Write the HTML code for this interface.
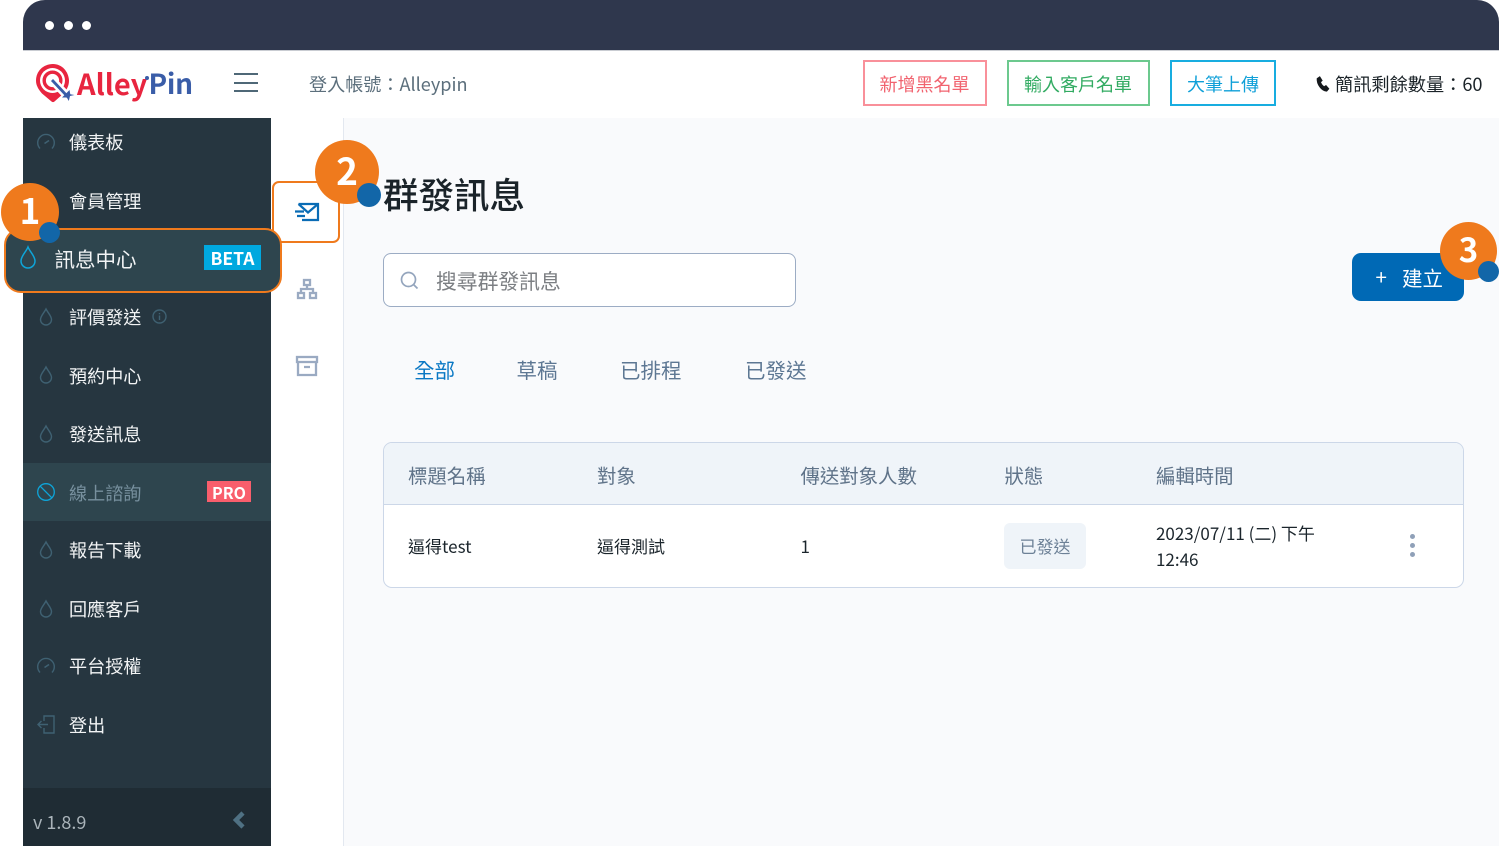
<!DOCTYPE html>
<html lang="zh-Hant"><head><meta charset="utf-8">
<style>
html,body{margin:0;padding:0;background:#fff;width:1500px;height:846px;overflow:hidden}
body{position:relative;font-family:"Liberation Sans","Noto Sans CJK TC",sans-serif}
*{box-sizing:border-box}
.t{position:absolute;white-space:nowrap;font-family:"Noto Sans CJK TC","Liberation Sans",sans-serif;line-height:24px;height:24px}
.b{position:absolute}
svg{position:absolute;overflow:visible}
.m{color:#f2f4f5;font-size:18.100px;left:69px}
.ic{fill:none;stroke:#3f6172;stroke-width:1.400}
.th{color:#5f7389;font-size:19.400px;top:463px}
.td{color:#1b252c;font-size:17px}
.tab{color:#5d7793;font-size:20.500px;top:357px}
.btn{position:absolute;top:60px;height:46px;border:2px solid;background:#fff;font-family:"Noto Sans CJK TC",sans-serif;font-size:18px;line-height:45px;text-align:center}
.c{position:absolute;border-radius:50%;background:#ef7a1d;color:#fff;font-family:"Noto Sans CJK TC",sans-serif;font-weight:700;text-align:center}
.d{position:absolute;border-radius:50%;background:#1266a8}
</style></head><body>
<div class="b" style="left:343px;top:118px;width:1156px;height:728px;background:#f9fafc"></div>
<div class="b" style="left:271px;top:118px;width:73px;height:728px;background:#fff;border-right:1.500px solid #e3e8f0"></div>

<div class="b" style="left:23px;top:0;width:1476px;height:51px;background:#2f374d;border-radius:22px 22px 0 0;border-bottom:1px solid #c9ccd2"></div>
<div class="b" style="left:45px;top:21px;width:9px;height:9px;border-radius:50%;background:#fff"></div>
<div class="b" style="left:64px;top:21px;width:9px;height:9px;border-radius:50%;background:#fff"></div>
<div class="b" style="left:82px;top:21px;width:9px;height:9px;border-radius:50%;background:#fff"></div>

<svg style="left:35px;top:64px" width="40" height="40" viewBox="0 0 40 40">
<path d="M18 0C8 0 1 7.500 1 16.500c0 5 2.500 9 6 13l9.500 8c1 .800 2 .800 3 0l9-8c3.500-4 5.500-8 5.500-13C33.500 7.500 27 0 18 0z" fill="#e8253f"/>
<circle cx="17.500" cy="16.500" r="12.500" fill="#fff"/>
<circle cx="17.500" cy="16.500" r="8.300" fill="none" stroke="#e8253f" stroke-width="3.400"/>
<path d="M17 16l19 20" stroke="#fff" stroke-width="8"/>
<path d="M17 16l16 17" stroke="#3a5da8" stroke-width="2.800"/>
<path d="M27 33.500l7.500-7.500 .8 4.200 4.200 .8-4.500 1-1.200 5-2-3.500z" fill="#3a5da8"/>
</svg>
<div class="t" style="left:77px;top:63px;height:40px;line-height:40px;font-size:29px;font-weight:700;color:#e8253f;letter-spacing:0">Alley</div>
<div class="b" style="left:145px;top:76px;width:4px;height:4px;border-radius:50%;background:#3a5da8"></div>
<div class="t" style="left:148.500px;top:63px;height:40px;line-height:40px;font-size:28px;font-weight:700;color:#3a5da8;letter-spacing:-.3px">Pin</div>
<div class="b" style="left:234px;top:73px;width:24px;height:2px;background:#4f6877"></div>
<div class="b" style="left:234px;top:82px;width:24px;height:2px;background:#4f6877"></div>
<div class="b" style="left:234px;top:90px;width:24px;height:2px;background:#4f6877"></div>
<div class="t" style="left:309px;top:72px;font-size:18.100px;color:#5c6f7c">登入帳號：Alleypin</div>

<div class="btn" style="left:863px;width:124px;border-color:#f9909a;color:#f1636f;text-indent:-1px">新增黑名單</div>
<div class="btn" style="left:1007px;width:143px;border-color:#6cc98e;color:#32ab62;text-indent:-1px">輸入客戶名單</div>
<div class="btn" style="left:1170px;width:106px;border-color:#18ade0;color:#0fa0d8">大筆上傳</div>
<svg style="left:1316px;top:76px" width="15" height="16" viewBox="0 0 15 16"><path d="M1 2.500 3.800.6l2.500 4-1.700 1.500c.6 1.700 1.700 3.200 3.400 4.500l2-1.200 3 3.400L10.800 15.300C5 14.800.6 8 1 2.500z" fill="#15191c" stroke="#15191c" stroke-width=".6"/></svg>
<div class="t" style="left:1335px;top:72px;font-size:18.200px;color:#1b2328">簡訊剩餘數量：60</div>

<div class="b" style="left:23px;top:118px;width:248px;height:728px;background:#263640"></div>
<div class="b" style="left:23px;top:788px;width:248px;height:58px;background:#1f2c34"></div>
<div class="b" style="left:23px;top:463px;width:248px;height:58px;background:#2e454e"></div>

<svg class="ic" style="left:37px;top:133px" width="18" height="18" viewBox="0 0 18 18"><path d="M3 15.500A8.300 8.300 0 1 1 15 15.500"/><path d="M7.500 10.500 12 7.500" stroke-width="1.600"/></svg>
<div class="t m" style="top:130px">儀表板</div>
<div class="t m" style="top:189px">會員管理</div>

<svg class="ic" style="left:39px;top:308px" width="14" height="18" viewBox="0 0 14 18"><path d="M7 1C5 5 1.500 8 1.500 11.500a5.500 5.500 0 0 0 11 0C12.500 8 9 5 7 1z"/></svg>
<div class="t m" style="top:305px">評價發送</div>
<svg class="ic" style="left:152px;top:309px" width="15" height="15" viewBox="0 0 15 15" stroke-width="1.300"><circle cx="7.500" cy="7.500" r="6.500"/><path d="M7.500 6.500v4.500M7.500 4v1.300"/></svg>
<svg class="ic" style="left:39px;top:366px" width="14" height="18" viewBox="0 0 14 18"><path d="M7 1C5 5 1.500 8 1.500 11.500a5.500 5.500 0 0 0 11 0C12.500 8 9 5 7 1z"/></svg>
<div class="t m" style="top:363.500px">預約中心</div>
<svg class="ic" style="left:39px;top:425px" width="14" height="18" viewBox="0 0 14 18"><path d="M7 1C5 5 1.500 8 1.500 11.500a5.500 5.500 0 0 0 11 0C12.500 8 9 5 7 1z"/></svg>
<div class="t m" style="top:422px">發送訊息</div>
<svg style="left:37px;top:483px" width="18" height="18" viewBox="0 0 18 18" fill="none" stroke="#0ea5d9" stroke-width="1.300"><circle cx="9" cy="9" r="8.300"/><path d="M3.200 3.200 14.800 14.800"/></svg>
<div class="t m" style="top:481px;color:#77909e">線上諮詢</div>
<div class="b" style="left:207px;top:481px;width:44px;height:21px;background:#f95e6c;color:#fff;font:700 16px/23px 'Noto Sans CJK TC',sans-serif;text-align:center">PRO</div>
<svg class="ic" style="left:39px;top:541px" width="14" height="18" viewBox="0 0 14 18"><path d="M7 1C5 5 1.500 8 1.500 11.500a5.500 5.500 0 0 0 11 0C12.500 8 9 5 7 1z"/></svg>
<div class="t m" style="top:537.500px">報告下載</div>
<svg class="ic" style="left:39px;top:600px" width="14" height="18" viewBox="0 0 14 18"><path d="M7 1C5 5 1.500 8 1.500 11.500a5.500 5.500 0 0 0 11 0C12.500 8 9 5 7 1z"/></svg>
<div class="t m" style="top:596.500px">回應客戶</div>
<svg class="ic" style="left:37px;top:657px" width="18" height="18" viewBox="0 0 18 18"><path d="M3 15.500A8.300 8.300 0 1 1 15 15.500"/><path d="M7.500 10.500 12 7.500" stroke-width="1.600"/></svg>
<div class="t m" style="top:654px">平台授權</div>
<svg class="ic" style="left:37px;top:715px" width="18" height="19" viewBox="0 0 18 19"><path d="M7 6V1h10v17H7v-5"/><path d="M1 9.500h10M4.500 6 1 9.500 4.500 13"/></svg>
<div class="t m" style="top:713px">登出</div>
<div class="t" style="left:33px;top:809.500px;font-size:18px;color:#aab4ba">v 1.8.9</div>
<svg style="left:232px;top:811px" width="14" height="18" viewBox="0 0 14 18"><path d="M11 2 4 9l7 7" fill="none" stroke="#4f7183" stroke-width="4.500"/></svg>

<div class="b" style="left:272px;top:181px;width:68px;height:62px;border:2px solid #ef7a1d;border-radius:7px;background:#fff"></div>
<svg style="left:295px;top:203px" width="24" height="18" viewBox="0 0 24 18" fill="none" stroke="#0a6cb5" stroke-width="2.200"><path d="M3.500 1h19.500v16H7M3.500 1 13 9.500 23 1M0 8.500h9M2 13h8" /></svg>
<svg style="left:297px;top:279px" width="20" height="20" viewBox="0 0 20 20" fill="none" stroke="#9aaac2" stroke-width="2.300"><rect x="7" y="1" width="6" height="5"/><rect x="1" y="14" width="6" height="5"/><rect x="13" y="14" width="6" height="5"/><path d="M10 6v4M4 14v-4h12v4"/></svg>
<svg style="left:296px;top:356px" width="22" height="20" viewBox="0 0 22 20" fill="none" stroke="#9aaac2" stroke-width="2.300"><rect x="1" y="1" width="20" height="5"/><path d="M2 6v13h18V6M8 11h6"/></svg>

<div class="t" style="left:383px;top:169px;height:50px;line-height:50px;font-size:35.500px;font-weight:500;color:#1a2329">群發訊息</div>

<div class="b" style="left:383px;top:253px;width:413px;height:54px;border:1px solid #9cacc4;border-radius:8px;background:#fff"></div>
<svg style="left:400px;top:271px" width="19" height="19" viewBox="0 0 19 19" fill="none" stroke="#94a5bd" stroke-width="1.700"><circle cx="8.500" cy="8.500" r="7"/><path d="M13.500 13.500l4 4"/></svg>
<div class="t" style="left:436px;top:267.500px;font-size:20.800px;color:#7c7f83">搜尋群發訊息</div>

<div class="b" style="left:1352px;top:253px;width:112px;height:48px;background:#0069b5;border-radius:9px"></div>
<div class="t" style="left:1375.500px;top:264px;font-size:20.500px;color:#fff;letter-spacing:.5px">+</div>
<div class="t" style="left:1402px;top:265px;font-size:20.500px;color:#fff">建立</div>

<div class="t tab" style="left:414px;color:#0a78c4">全部</div>
<div class="t tab" style="left:516.500px">草稿</div>
<div class="t tab" style="left:620px">已排程</div>
<div class="t tab" style="left:745px">已發送</div>

<div class="b" style="left:383px;top:442px;width:1081px;height:146px;border:1px solid #ccd7e8;border-radius:9px;background:#fff;overflow:hidden">
<div style="height:62px;background:#eff4f9;border-bottom:1px solid #ccd7e8"></div>
</div>
<div class="t th" style="left:408px">標題名稱</div>
<div class="t th" style="left:597px">對象</div>
<div class="t th" style="left:800.500px">傳送對象人數</div>
<div class="t th" style="left:1004.500px">狀態</div>
<div class="t th" style="left:1156px">編輯時間</div>
<div class="t td" style="left:408px;top:533.500px">逼得test</div>
<div class="t td" style="left:597px;top:533.500px">逼得測試</div>
<div class="t td" style="left:800.500px;top:533.500px">1</div>
<div class="b" style="left:1004px;top:523px;width:82px;height:46px;border-radius:6px;background:#eff4f9;color:#6d8197;font:17px/46px 'Noto Sans CJK TC',sans-serif;text-align:center">已發送</div>
<div class="t td" style="left:1156px;top:521px">2023/07/11 (二) 下午</div>
<div class="t td" style="left:1156px;top:547px">12:46</div>
<div class="b" style="left:1410px;top:534px;width:5px;height:5px;border-radius:50%;background:#8fa0b8"></div>
<div class="b" style="left:1410px;top:543px;width:5px;height:5px;border-radius:50%;background:#8fa0b8"></div>
<div class="b" style="left:1410px;top:552px;width:5px;height:5px;border-radius:50%;background:#8fa0b8"></div>

<div class="b" style="left:4px;top:228px;width:278px;height:65px;background:#2e454e;border:2px solid #ef7a1d;border-radius:17px"></div>
<svg style="left:20px;top:246px" width="16" height="23" viewBox="0 0 16 23" fill="none" stroke="#0ea5d9" stroke-width="1.500"><path d="M8 1C6 6 1 10 1 15a7 7 0 0 0 14 0C15 10 10 6 8 1z"/></svg>
<div class="t" style="left:54.500px;top:245.500px;font-size:20.500px;color:#f2f4f5">訊息中心</div>
<div class="b" style="left:204px;top:245px;width:57px;height:25px;background:#00a8df;color:#fff;font:700 17.500px/27px 'Noto Sans CJK TC',sans-serif;text-align:center">BETA</div>

<div class="c" style="left:1px;top:183px;width:58px;height:58px;font-size:35px;line-height:54px">1</div>
<div class="d" style="left:39px;top:222px;width:21px;height:21px"></div>
<div class="c" style="left:315px;top:140px;width:64px;height:64px;font-size:37px;line-height:58px">2</div>
<div class="d" style="left:357px;top:183px;width:24px;height:24px"></div>
<div class="c" style="left:1440px;top:222px;width:57px;height:58px;font-size:33px;line-height:52px">3</div>
<div class="d" style="left:1478px;top:261px;width:21px;height:21px"></div>
</body></html>
